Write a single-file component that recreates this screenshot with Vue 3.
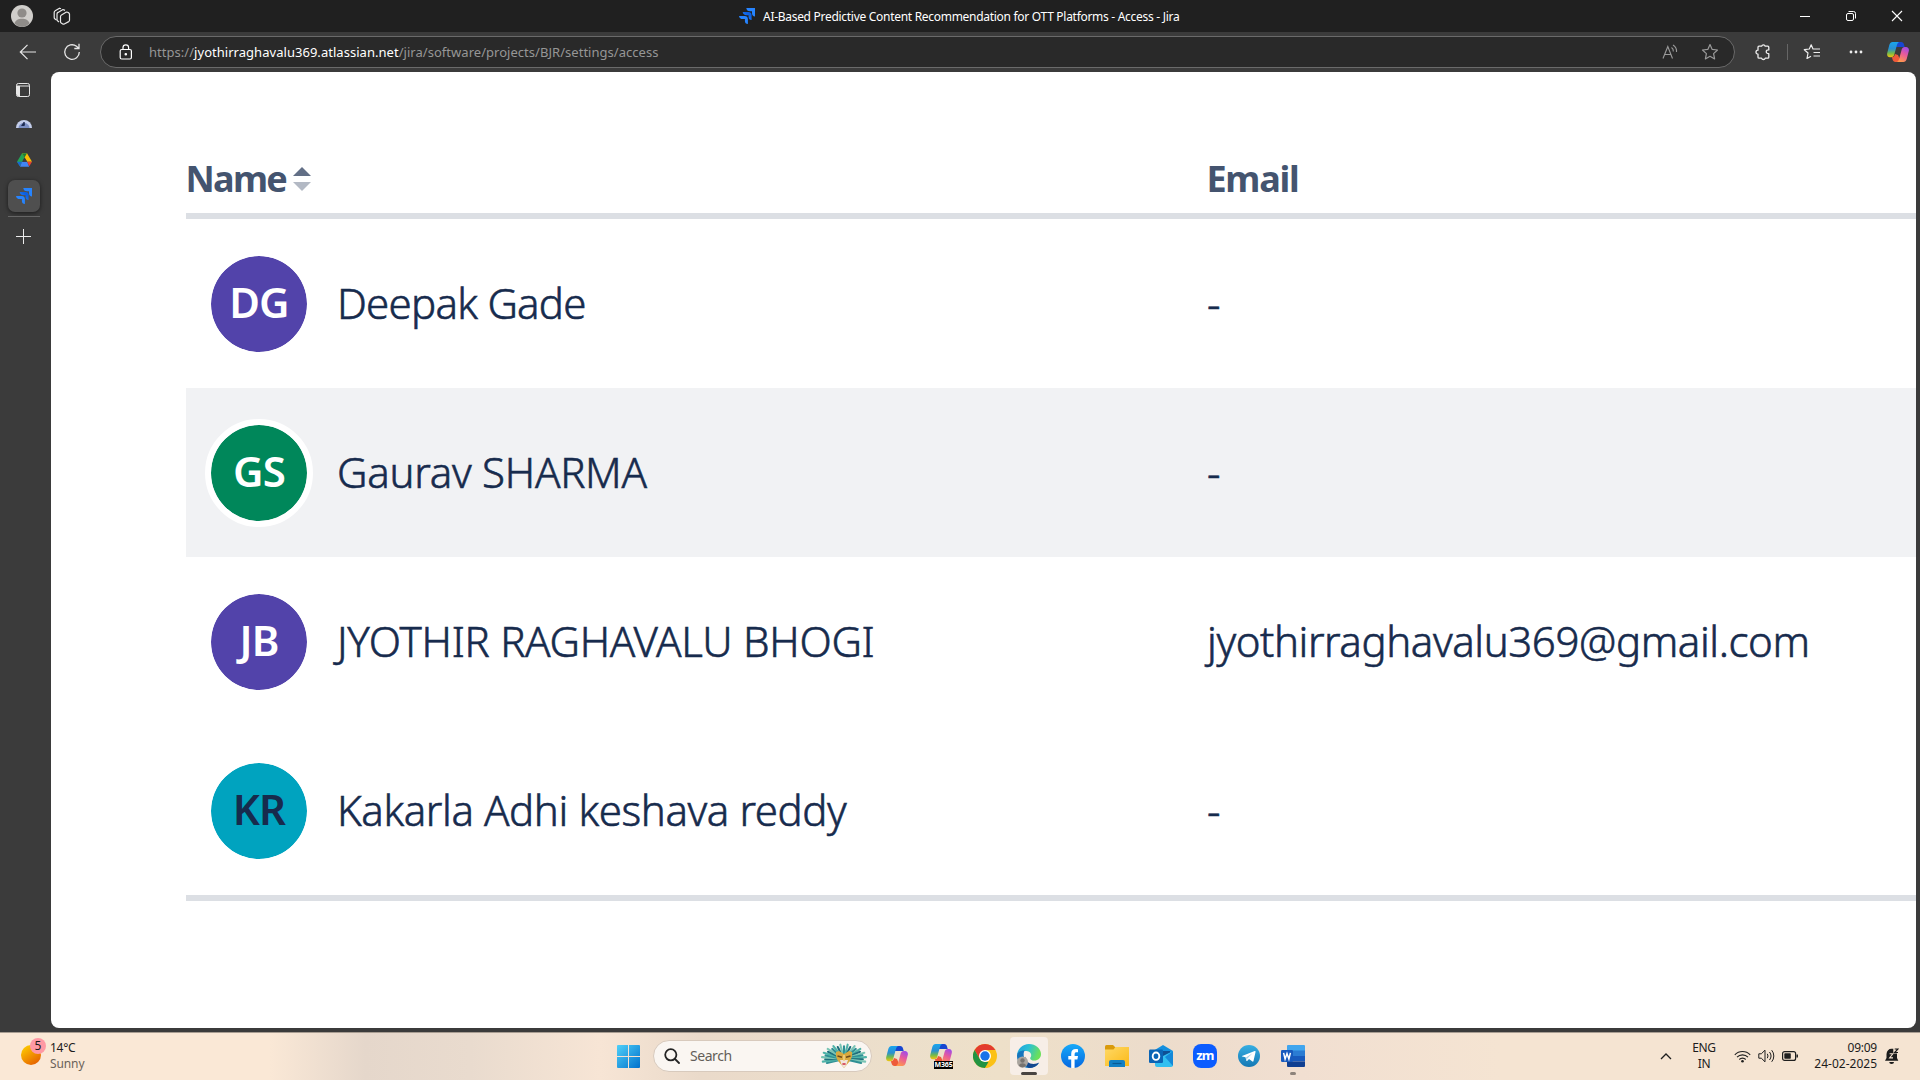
<script setup>
const rows = [
  { initials: 'DG', name: 'Deepak Gade', email: '-', tone: 'purple', id: 'dg' },
  { initials: 'GS', name: 'Gaurav SHARMA', email: '-', tone: 'green', id: 'gs' },
  { initials: 'JB', name: 'JYOTHIR RAGHAVALU BHOGI', email: 'jyothirraghavalu369@gmail.com', tone: 'purple', id: 'jb' },
  { initials: 'KR', name: 'Kakarla Adhi keshava reddy', email: '-', tone: 'teal', id: 'kr' },
]

const feathers = []
for (let i = 0; i < 25; i++) {
  const a = Math.PI * (0.86 + (i / 24) * 1.28)
  const long = i % 2 ? 1 : 0.86
  feathers.push({
    x: 23 + Math.cos(a) * 22 * long,
    y: 15 + Math.sin(a) * 13.5 * long,
    c: ['#2f8f94', '#4fb3a8', '#1f6f7d', '#79c4b4'][i % 4],
  })
}
</script>

<template>
  <div class="screen">
    <svg class="defs" width="0" height="0" aria-hidden="true">
      <defs>
        <linearGradient id="cpA" x1="0" y1="0" x2="0" y2="1">
          <stop offset="0" stop-color="#19a5ee" /><stop offset=".45" stop-color="#2a8fd0" /><stop offset=".72" stop-color="#6fb94e" /><stop offset="1" stop-color="#f4c60c" />
        </linearGradient>
        <linearGradient id="cpB" x1=".7" y1="0" x2=".3" y2="1">
          <stop offset="0" stop-color="#a04be8" /><stop offset=".45" stop-color="#e85a9a" /><stop offset="1" stop-color="#ff9a4a" />
        </linearGradient>
        <linearGradient id="jiraG" x1="1" y1="0" x2="0" y2="1">
          <stop offset=".3" stop-color="#0c5fe0" /><stop offset=".9" stop-color="#2684ff" />
        </linearGradient>
        <linearGradient id="winG" x1="0" y1="0" x2="1" y2="1">
          <stop offset="0" stop-color="#4fd0f8" /><stop offset="1" stop-color="#0070cc" />
        </linearGradient>
        <linearGradient id="sunG" x1=".1" y1="0" x2=".8" y2="1">
          <stop offset="0" stop-color="#ffd100" /><stop offset="1" stop-color="#e45c00" />
        </linearGradient>
        <linearGradient id="edgeG" x1="0" y1="0" x2="1" y2=".3">
          <stop offset="0" stop-color="#1f9fe0" /><stop offset=".5" stop-color="#2bc0d4" /><stop offset="1" stop-color="#6be05a" />
        </linearGradient>
        <linearGradient id="fbG" x1="0" y1="0" x2="0" y2="1">
          <stop offset="0" stop-color="#17a9f8" /><stop offset="1" stop-color="#0668e1" />
        </linearGradient>
        <linearGradient id="folG" x1="0" y1="0" x2="1" y2="1">
          <stop offset="0" stop-color="#ffd966" /><stop offset="1" stop-color="#fbb917" />
        </linearGradient>
        <linearGradient id="tgG" x1="0" y1="0" x2="0" y2="1">
          <stop offset="0" stop-color="#37aee2" /><stop offset="1" stop-color="#1478b4" />
        </linearGradient>
        <symbol id="copilot" viewBox="0 0 22 20">
          <path d="M8 0h6.2c1.6 0 2.4 1 2.8 2.4L17.700 5H14L9 5z" fill="#1746d1" />
          <path d="M5.600 0h6.600c-1.300.4-1.900 1.700-2.400 3.500L7.300 12.500C6.800 14.200 6 15.200 4.200 15.200H3C.8 15.200-.3 13.300.2 11.200L2.300 3C2.900 1 4 0 5.600 0z" fill="url(#cpA)" />
          <path d="M14 20H8.500c-1.700 0-2.500-1-2.900-2.400L4.800 15.200C7 15.100 7.500 13.600 8 12l3 1z" fill="#ee5a3a" />
          <path d="M16.400 20H9.800c1.300-.4 1.900-1.700 2.400-3.500l2.500-9C15.200 5.800 16 4.900 17.800 4.900H19c2.200 0 3.300 1.900 2.800 4L19.700 17c-.6 2-1.700 3-3.300 3z" fill="url(#cpB)" />
        </symbol>
        <symbol id="jira" viewBox="0 0 16 16">
          <path d="M0 7.900h5.700c2 0 3.200 1.100 3.200 3.100V16c-1.900-.1-3-1.200-3-3.100v-1.800H4C1.600 11.100.1 9.900 0 7.900z" fill="#2684ff" />
          <path d="M3.700 4h5.700c2 0 3.200 1.100 3.200 3.100v5c-1.900-.1-3-1.200-3-3.100V7.200H7.600C5.200 7.200 3.800 6 3.700 4z" fill="url(#jiraG)" />
          <path d="M7.300 0H16v8.400c-1.900-.1-3-1.300-3-3.200V3.300h-1.900C8.800 3.300 7.400 2 7.300 0z" fill="#2684ff" />
        </symbol>
      </defs>
    </svg>

    <header class="titlebar">
      <svg class="profile" width="22" height="22" viewBox="0 0 22 22">
        <circle cx="11" cy="11" r="11" fill="#d0cecb" />
        <circle cx="11" cy="8" r="4.600" fill="#8f8c89" />
        <path d="M3.500 18.500c1-3.600 4-4.700 7.500-4.700s6.500 1.100 7.500 4.700A11 11 0 0 1 11 22a11 11 0 0 1-7.500-3.500z" fill="#8f8c89" />
      </svg>
      <svg class="spaces" width="18" height="18" viewBox="0 0 18 18" fill="none" stroke="#e8e8e8" stroke-width="1.200" stroke-linejoin="round">
        <path d="M3.500 13 2 12c-.6-.4-.8-.9-.8-1.500V5.500c0-.8.3-1.300 1-1.700L6.500 1.200 8 1.800" />
        <path d="M6 15 4.800 14.100C4.300 13.700 4 13.200 4 12.500V7c0-.8.300-1.300 1-1.600l5-2.900 2 .9" />
        <path d="M7.500 9.500c0-.8.300-1.200 1-1.600L13 5.200c.6-.3 1-.2 1.600.1l1.200.6c.4.300.7.700.7 1.300v6c0 .6-.3 1.100-.8 1.400l-4.400 2.400c-.6.300-1 .3-1.600 0l-1.500-.9c-.5-.3-.7-.7-.7-1.300z" />
      </svg>
      <div class="tab-title">
        <svg width="16" height="16"><use href="#jira" /></svg>
        <span>AI-Based Predictive Content Recommendation for OTT Platforms - Access - Jira</span>
      </div>
      <div class="win-controls">
        <svg width="46" height="32" viewBox="0 0 46 32"><path d="M18 16.500h10" stroke="#fff" /></svg>
        <svg width="46" height="32" viewBox="0 0 46 32" fill="none" stroke="#fff">
          <rect x="18.500" y="13.500" width="7" height="7" rx="1.500" /><path d="M20.500 11.500h5a2 2 0 0 1 2 2v5" />
        </svg>
        <svg width="46" height="32" viewBox="0 0 46 32"><path d="m18 11 10 10M28 11 18 21" stroke="#fff" stroke-width="1.100" /></svg>
      </div>
    </header>

    <div class="toolbar">
      <svg class="back" width="18" height="18" viewBox="0 0 18 18" fill="none" stroke="#e6e6e6" stroke-width="1.200"><path d="M17 9H1.500M8.500 1.800 1.300 9l7.200 7.200" /></svg>
      <svg class="reload" width="18" height="18" viewBox="0 0 18 18" fill="none" stroke="#e6e6e6" stroke-width="1.300"><path d="M16.300 9A7.300 7.300 0 1 1 13.500 3.300L15.700 5.200M16 .8v4.700h-4.700" /></svg>
      <div class="address">
        <svg class="lock" width="14" height="16" viewBox="0 0 14 16" fill="none" stroke="#fff" stroke-width="1.200">
          <rect x="1.200" y="5.500" width="11.200" height="9.500" rx="1.500" /><path d="M4 5.500V3.600a2.800 2.800 0 0 1 5.600 0v1.900" /><circle cx="6.800" cy="10.200" r=".7" fill="#fff" />
        </svg>
        <div class="url">https://<b>jyothirraghavalu369.atlassian.net</b>/jira/software/projects/BJR/settings/access</div>
        <svg class="read" width="17" height="16" viewBox="0 0 17 16" fill="none" stroke="#9a9a9a" stroke-width="1.100">
          <path d="M1 14.500 5.800 2.500l4.700 12M2.600 10.500h6.500M9.500 3.500c1.500 1 2 2.500 1.800 4M11 1c2.700 1.700 3.800 4.200 3.500 7" />
        </svg>
        <svg class="star" width="18" height="18" viewBox="0 0 18 18" fill="none" stroke="#9a9a9a" stroke-width="1.200" stroke-linejoin="round">
          <path d="m9 1.500 2.200 4.900 5.300.6-3.900 3.600 1 5.300L9 13.300l-4.600 2.600 1-5.300L1.500 7l5.300-.6z" />
        </svg>
      </div>
      <div class="tools">
        <svg class="puzzle" width="18" height="18" viewBox="0 0 18 18" fill="none" stroke="#eee" stroke-width="1.300" stroke-linejoin="round">
          <path d="M5 3.200h2.600a1.900 1.900 0 0 1 3.600 0h2.600q1 0 1 1v2.700c-3.400-.4-3.400 4 0 3.800v3.500q0 1-1 1h-2.600a1.900 1.900 0 0 1-3.600 0H5q-1 0-1-1v-3a2 2 0 0 1 0-4V4.200q0-1 1-1z" />
        </svg>
        <i class="sep" />
        <svg class="favs" width="18" height="18" viewBox="0 0 18 18" fill="none" stroke="#eee" stroke-width="1.200" stroke-linejoin="round">
          <path d="M11.500 6H10L8.200 1.800 6.300 6 1.300 6.700 5 10l-1 5.500 4-2.300M11.500 6H17M10.500 9.500H17M10.500 13H17" />
        </svg>
        <svg class="dots" width="14" height="4" viewBox="0 0 14 4" fill="#eee"><circle cx="2" cy="2" r="1.400" /><circle cx="7" cy="2" r="1.400" /><circle cx="12" cy="2" r="1.400" /></svg>
        <svg class="cp" width="22" height="20"><use href="#copilot" /></svg>
      </div>
    </div>

    <div class="body">
      <aside class="rail">
        <div class="slot">
          <svg width="14" height="14" viewBox="0 0 14 14"><rect x=".5" y=".5" width="13" height="13" rx="1.800" fill="none" stroke="#e6e6e6" /><path d="M.5 3h13" stroke="#e6e6e6" /><path d="M1 3h3v10H2q-1 0-1-1z" fill="#e6e6e6" /></svg>
        </div>
        <div class="slot">
          <svg width="16" height="8" viewBox="0 0 16 8"><path d="M0 8a8 8 0 0 1 16 0z" fill="#c3cdea" /><path d="M2.500 8a5.500 5 0 0 1 11 0z" fill="#7b8fc4" /><path d="m5 6 2-3 2 1-.5 2z" fill="#1c2a50" /><circle cx="8" cy="3" r="1" fill="#1c2a50" /></svg>
        </div>
        <div class="slot">
          <svg width="15" height="14" viewBox="0 0 15 14"><path d="M5 .2 7.600 4.600 2.900 13.200 0 8.700z" fill="#23a455" /><path d="M5 .2h5L12.500 4.400 15 8.700h-4.800z" fill="#fbbc04" /><path d="M5 .2h5L7.500 4.600z" fill="#188038" /><path d="M0 8.700h5.200L2.800 13.300z" fill="#1967d2" /><path d="M5 8.700h5.200l2 5H3z" fill="#4285f4" /><path d="M10.200 8.700H15l-2.800 4.600z" fill="#ea4335" /><path d="M7.500 4.600 5.200 8.700h4.900z" fill="#3b3b3b" /></svg>
        </div>
        <div class="slot active"><svg width="16" height="16"><use href="#jira" /></svg></div>
        <i class="rule" />
        <svg class="plus" width="15" height="15" viewBox="0 0 15 15"><path d="M7.500 0v15M0 7.500h15" stroke="#ececec" /></svg>
      </aside>

      <main class="page">
        <div class="table">
          <div class="row head">
            <div class="name">
              <span class="h-name">Name</span>
              <svg class="sort" width="18" height="24" viewBox="0 0 18 24"><path d="M0 9 9 0l9 9z" fill="#626f86" /><path d="M0 15h18l-9 9z" fill="#b3b9c4" /></svg>
            </div>
            <div class="email h-email">Email</div>
          </div>
          <div v-for="r in rows" :key="r.id" class="row person" :class="r.id">
            <div class="name">
              <span class="avatar" :class="r.tone">{{ r.initials }}</span>
              <span class="label">{{ r.name }}</span>
            </div>
            <div class="email"><span>{{ r.email }}</span></div>
          </div>
        </div>
      </main>
    </div>

    <footer class="taskbar">
      <div class="weather">
        <div class="sun">
          <svg width="20" height="20" viewBox="0 0 20 20"><circle cx="10" cy="10" r="10" fill="url(#sunG)" /></svg>
          <span class="badge">5</span>
        </div>
        <div class="temps"><span>14°C</span><span class="dim">Sunny</span></div>
      </div>

      <div class="center">
        <div class="app start">
          <svg width="23" height="23" viewBox="0 0 23 23" fill="url(#winG)"><path d="M1 0h10v11H0V1q0-1 1-1zM12 0h10q1 0 1 1v10H12zM0 12h11v11H1q-1 0-1-1zM12 12h11v10q0 1-1 1H12z" /></svg>
        </div>
        <div class="search">
          <svg class="glass" width="16" height="16" viewBox="0 0 16 16" fill="none" stroke="#242424" stroke-width="1.800"><circle cx="6.800" cy="6.800" r="5.600" /><path d="m11 11 4 4" stroke-linecap="round" /></svg>
          <span>Search</span>
          <svg class="mask" width="46" height="26" viewBox="0 0 46 26">
            <path v-for="(f, i) in feathers" :key="i" :d="`M23 16L${f.x} ${f.y}`" :stroke="f.c" stroke-width="2.100" stroke-linecap="round" />
            <path d="m15 9 3-1 5 3 5-3 3 1c.5 4-.5 7-2.500 9.500L23 25l-5.500-6.500C15.500 16 14.500 13 15 9z" fill="#d9a93e" />
            <path d="M19 17h8l-1.500 4.500L23 25l-2.500-3.500z" fill="#f2e4dc" />
            <path d="m16.500 13 4.500 1.200M29.500 13 25 14.200" stroke="#6b4a1c" stroke-width="1.500" /><path d="M23 12v6" stroke="#f1d283" stroke-width="1.600" /><path d="M21.400 21h3.200" stroke="#d02c3c" stroke-width="1.500" />
          </svg>
        </div>
        <div class="app"><svg width="22" height="20"><use href="#copilot" /></svg></div>
        <div class="app m365"><svg width="24" height="22"><use href="#copilot" /></svg><span>M365</span></div>
        <div class="app">
          <svg width="24" height="24" viewBox="0 0 24 24"><circle cx="12" cy="12" r="12" fill="#fbc116" /><path d="M12 0A12 12 0 0 1 22.400 6H12L6.800 15 1.600 6A12 12 0 0 1 12 0z" fill="#e33b2e" /><path d="M1.600 6 6.800 15 12 18h5.200L12 24A12 12 0 0 1 1.600 6z" fill="#229342" /><path d="m17.200 15-5.200 9 3-.4L20 18z" fill="#fbc116" /><circle cx="12" cy="12" r="6" fill="#fff" /><circle cx="12" cy="12" r="4.700" fill="#1a73e8" /></svg>
        </div>
        <div class="app current">
          <svg width="24" height="24" viewBox="0 0 24 24"><path d="M0 12C0 5 5.500 0 12 0s12 4.600 12 10c0 4-3 6.500-6.500 6.500-3 0-4.500-1.200-4.300-2.600.1-.6 1.100-1.300 1-3C14 8.500 11.500 7 8.500 7 4 7 0 9.800 0 12z" fill="url(#edgeG)" /><path d="M0 12c0-3.500 3.500-5.800 8-5.400C5 8.500 7 19.500 13 20.500c3 .6 6-.2 9-1.500-2 3.200-6 5-10 5C5 24 0 19 0 12z" fill="#1575bd" /><path d="M8.300 12.500C8.200 17 12 20 16.500 20c2.500 0 4.300-.6 5.700-1.400C20 22 16.500 24 13 24c-4.500 0-6.500-7.500-4.700-11.500z" fill="#14488f" /><circle cx="5.500" cy="18" r="5.500" fill="#aaa59f" /><circle cx="5.500" cy="16.500" r="2.200" fill="#77736f" /><path d="M2 21.500c.8-3 6.200-3 7 0-2 2.500-5 2.500-7 0z" fill="#77736f" /></svg>
          <i class="mark" />
        </div>
        <div class="app"><svg width="24" height="24" viewBox="0 0 24 24"><circle cx="12" cy="12" r="12" fill="url(#fbG)" /><path d="M10.200 24v-8.500H7.300V12h2.900v-2c0-3.300 1.500-5 4.700-5 .6 0 1.700.1 2.100.2v3h-1.200c-1.600 0-2.200.6-2.200 2.200V12H17l-.6 3.500h-2.800V24z" fill="#fff" /></svg></div>
        <div class="app"><svg width="24" height="22" viewBox="0 0 24 22"><path d="M0 1.500Q0 0 1.500 0H8l2.500 2.500V7H0z" fill="#d99a0b" /><path d="M0 4.500h8.500l2-2.500H24v19H0z" fill="url(#folG)" /><path d="M4 22v-5q0-2 2-2h12q2 0 2 2v5z" fill="#1280c4" /><path d="M7.500 18.500h9" stroke="#085a94" stroke-width="1.200" /></svg></div>
        <div class="app"><svg width="24" height="22" viewBox="0 0 24 22"><path d="M5 5.500 14 0l10 6v7H5z" fill="#1490df" /><path d="M7 6h14v9H7z" fill="#0f4f94" /><path d="m10 13 14-7v14q0 2-2 2H8q-2 0-2-2v-3z" fill="#31bff0" /><path d="m24 6-8 6 8 9z" fill="#1488d8" /><rect y="4.500" width="14" height="13.500" rx="1.200" fill="#0a64b5" /><ellipse cx="7" cy="11.200" rx="3.300" ry="3.700" fill="none" stroke="#fff" stroke-width="1.900" /></svg></div>
        <div class="app"><span class="zoom">zm</span></div>
        <div class="app"><svg width="22" height="22" viewBox="0 0 22 22"><circle cx="11" cy="11" r="11" fill="url(#tgG)" /><path d="M4 11 16.700 6c.6-.2 1 .1.900.8L15.500 16c-.2.700-.6.800-1.100.5L11 14l-1.600 1.700c-.5.5-1 .4-1.100-.2l-.8-3.200L4.200 11.600c-.5-.2-.5-.5-.2-.6z" fill="#fff" /><path d="m8 12.500 6.500-4.300-5.200 5.300-.4 2.500z" fill="#a6cfe6" /></svg></div>
        <div class="app">
          <svg width="24" height="22" viewBox="0 0 24 22"><path d="M6 1q0-1 1-1h16q1 0 1 1v5H6z" fill="#41a5ee" /><path d="M6 5.500h18V11H6z" fill="#2b7cd3" /><path d="M6 11h18v5.500H6z" fill="#185abd" /><path d="M6 16.500h18V21q0 1-1 1H7q-1 0-1-1z" fill="#103f91" /><rect y="5" width="12" height="12" rx="1.200" fill="#185abd" /><path d="m2.600 7.800 1.500 6.300L6 8.500l1.900 5.600 1.500-6.300" fill="none" stroke="#fff" stroke-width="1.500" /></svg>
          <i class="mark small" />
        </div>
      </div>

      <div class="tray">
        <svg class="chev" width="12" height="7" viewBox="0 0 12 7" fill="none" stroke="#1f1f1f" stroke-width="1.300"><path d="m1 6 5-5 5 5" /></svg>
        <div class="lang"><span>ENG</span><span>IN</span></div>
        <svg class="wifi" width="17" height="13" viewBox="0 0 17 13" fill="none" stroke="#1f1f1f" stroke-width="1.100"><path d="M.8 4.800a10.700 10.700 0 0 1 15.400 0M3 7.200a7.600 7.600 0 0 1 11 0M5.300 9.500a4.500 4.500 0 0 1 6.400 0" /><circle cx="8.500" cy="11.300" r="1.300" fill="#1f1f1f" stroke="none" /></svg>
        <svg class="vol" width="17" height="14" viewBox="0 0 17 14" fill="none" stroke="#1f1f1f"><path d="M.8 4.800h2.500L7 1.200v11.600L3.300 9.200H.8zM9.300 4.800a4 4 0 0 1 0 4.400M11.500 3a6.500 6.500 0 0 1 0 8M13.700 1.200a9 9 0 0 1 0 11.600" /></svg>
        <svg class="bat" width="16" height="10" viewBox="0 0 16 10"><rect x=".6" y=".6" width="13" height="8.800" rx="2" fill="none" stroke="#1f1f1f" stroke-width="1.200" /><rect x="2.300" y="2.300" width="6.500" height="5.400" rx=".7" fill="#1f1f1f" /><path d="M15.200 3.500v3" stroke="#1f1f1f" stroke-width="1.500" /></svg>
        <div class="clock"><span class="time">09:09</span><span class="date">24-02-2025</span></div>
        <svg class="bell" width="14" height="16" viewBox="0 0 14 16"><path d="M1.500 6C1.800 2.800 3.800.8 6.500.8h1.800V5.500h3.700V10l1.300 2.800H0L1.500 10z" fill="#1b1b1b" /><path d="M4.200 14h4.800a2.400 2 0 0 1-4.800 0z" fill="#1b1b1b" /><path d="M4.600 5.800h3.200L4.600 9.900H8" fill="none" stroke="#f5e4d2" stroke-width="1.100" /><path d="M9.700 1h3.300L9.700 4.500H13" fill="none" stroke="#1b1b1b" stroke-width="1.200" /></svg>
      </div>
    </footer>
  </div>
</template>

<style>
body { margin: 0; overflow: hidden; }
</style>

<style scoped>
.screen { width: 1920px; height: 1080px; display: flex; flex-direction: column; background: #3b3b3b; font-family: "Noto Sans", "Open Sans", sans-serif; overflow: hidden; }
.screen *, .screen *::before { box-sizing: border-box; }
.screen svg { display: block; flex: none; }
.screen .defs { position: absolute; }

.titlebar { height: 32px; flex: none; display: flex; align-items: center; background: #202020; color: #fff; }
.profile { margin-left: 11px; }
.spaces { margin-left: 20px; }
.tab-title { margin-left: 668px; display: flex; align-items: center; gap: 8px; width: 500px; font-size: 12px; line-height: 16px; white-space: nowrap; letter-spacing: -0.29px; }
.win-controls { margin-left: auto; display: flex; }
.tab-title span { margin-top: 1px; }

.toolbar { height: 40px; flex: none; display: flex; align-items: center; }
.back { margin-left: 19px; }
.reload { margin-left: 26px; }
.address { margin-left: 19px; width: 1635px; height: 32px; border: 1px solid #6a6a6a; border-radius: 16px; background: #292929; display: flex; align-items: center; }
.lock { margin-left: 18px; }
.url { margin-left: 16px; font-size: 13px; line-height: 18px; color: #969696; white-space: nowrap; letter-spacing: 0.035px; }
.url b { font-weight: 400; color: #fff; }
.read { margin-left: auto; margin-right: 22px; }
.star { margin-right: 15px; }
.tools { display: flex; align-items: center; }
.puzzle { margin-left: 19px; }
.sep { width: 1px; height: 16px; background: #666; margin-left: 15px; }
.favs { margin-left: 15px; }
.dots { margin-left: 28px; }
.cp { margin-left: 24px; }

.body { flex: 1; min-height: 0; display: flex; }
.rail { width: 51px; flex: none; padding-left: 8px; display: flex; flex-direction: column; }
.slot { width: 32px; height: 32px; display: flex; align-items: center; justify-content: center; margin-bottom: 4px; }
.slot:first-child { margin-top: 2px; margin-bottom: 2px; padding-right: 2px; }
.slot.active { background: #4f4f4f; border-radius: 7px; box-shadow: 0 1px 4px rgba(0, 0, 0, .55); margin-bottom: 3px; }
.rule { width: 32px; height: 1px; background: #666; margin-top: 1px; }
.plus { margin: 12px 0 0 8px; }
.page { width: 1865px; height: 956px; background: #fff; border-radius: 8px; overflow: hidden; color: #172b4d; }

.table { margin: 60px 0 0 135px; border-bottom: 6px solid #dcdfe4; }
.row { display: flex; align-items: center; }
.row .name { width: 1021px; flex: none; display: flex; align-items: center; white-space: nowrap; }
.head { height: 87px; border-bottom: 6px solid #dcdfe4; padding-top: 13px; font-size: 36px; line-height: 48px; font-weight: 700; color: #44546f; }
.h-name { letter-spacing: -1.7px; margin-left: -0.500px; }
.h-email { letter-spacing: -1.3px; }
.head .h-email { margin-left: -0.500px; }
.sort { margin-left: 7px; }
.person { height: 169px; font-size: 42px; line-height: 56px; white-space: nowrap; font-weight: 300; letter-spacing: -0.41px; }
.person.gs { background: #f1f2f4; }
.dg .label { letter-spacing: -0.74px; }
.gs .label, .jb .label { letter-spacing: -0.25px; }
.label, .email span { display: block; margin-top: -2px; }
.label, .person .email span { -webkit-text-stroke: 0.6px #172b4d; }
.avatar { width: 108px; height: 108px; margin: 0 24px 0 19px; border-radius: 50%; border: 6px solid #fff; background-clip: padding-box; display: flex; align-items: center; justify-content: center; font-weight: 600; color: #fff; padding-bottom: 3px; letter-spacing: -0.8px; }
.purple { background-color: #5243aa; }
.green { background-color: #00875a; }
.teal { background-color: #00a3bf; color: #172b4d; }

.taskbar { height: 48px; flex: none; border-top: 1px solid #a89d92; display: flex; align-items: center; position: relative; background: linear-gradient(90deg, #fae8d6 0, #fae8d6 270px, #e5d7cb 365px, #e9dbce 470px, #f7e5d5 600px, #eadaca 700px, #ecdfcb 900px, #eee0c9 1000px, #ecdccb 1150px, #f1dfd1 1300px, #f5e4d2 1500px, #f5e4d2 100%); color: #1c1c1c; font-size: 12px; line-height: 16px; padding-bottom: 1px; }
.weather { width: 606px; display: flex; align-items: center; padding-left: 21px; }
.sun { position: relative; }
.sun svg { margin-top: -2px; }
.sun .badge { position: absolute; left: 9px; top: -9px; width: 16px; height: 16px; border-radius: 50%; background: #ff99a4; font-size: 12px; line-height: 16px; text-align: center; }
.temps { margin-left: 9px; display: flex; flex-direction: column; letter-spacing: -0.3px; font-size: 12px; }
.temps .dim { letter-spacing: -0.1px; }
.dim { color: #6a6259; }
.center { display: flex; align-items: center; }
.app { width: 44px; height: 40px; display: flex; align-items: center; justify-content: center; position: relative; }
.start { margin-right: 3px; }
.center .search { width: 219px; height: 32px; margin-right: 3px; border: 1px solid #d8cabd; border-radius: 16px; background: #faf6f2; display: flex; align-items: center; color: #635e59; font-size: 14px; }
.glass { margin-left: 10px; }
.search span { margin-left: 10px; letter-spacing: -0.45px; }
.mask { margin-left: auto; margin-right: 4px; }
.m365 svg { height: 20px; margin-bottom: 4px; }
.m365 span { position: absolute; left: 15px; bottom: 7px; width: 19px; height: 8px; background: #000; color: #fff; font-size: 7px; line-height: 8px; font-weight: 700; text-align: center; letter-spacing: -0.1px; }
.current::before { content: ""; position: absolute; left: 3px; top: 1px; width: 38px; height: 38px; border-radius: 4px; background: #f7eee7; z-index: 0; }
.current svg { position: relative; }
.mark { position: absolute; bottom: 1px; left: 14px; width: 16px; height: 3px; border-radius: 2px; background: #484441; }
.mark.small { width: 6px; left: 19px; background: #8d837b; }
.zoom { width: 24px; height: 24px; border-radius: 8px; background: #0b5cff; color: #fff; font-size: 13px; line-height: 22px; font-weight: 700; text-align: center; letter-spacing: -0.7px; }
.tray { margin-left: auto; display: flex; align-items: center; }
.chev { margin-right: 20px; }
.lang { width: 24px; display: flex; flex-direction: column; align-items: center; letter-spacing: -0.3px; margin-right: 18px; }
.wifi { margin-right: 7px; }
.vol { margin-right: 7px; }
.clock { width: 79px; margin-right: 8px; display: flex; flex-direction: column; align-items: flex-end; white-space: nowrap; letter-spacing: -0.25px; }
.clock .date { letter-spacing: 0; }
.bell { margin-right: 21px; }
</style>
